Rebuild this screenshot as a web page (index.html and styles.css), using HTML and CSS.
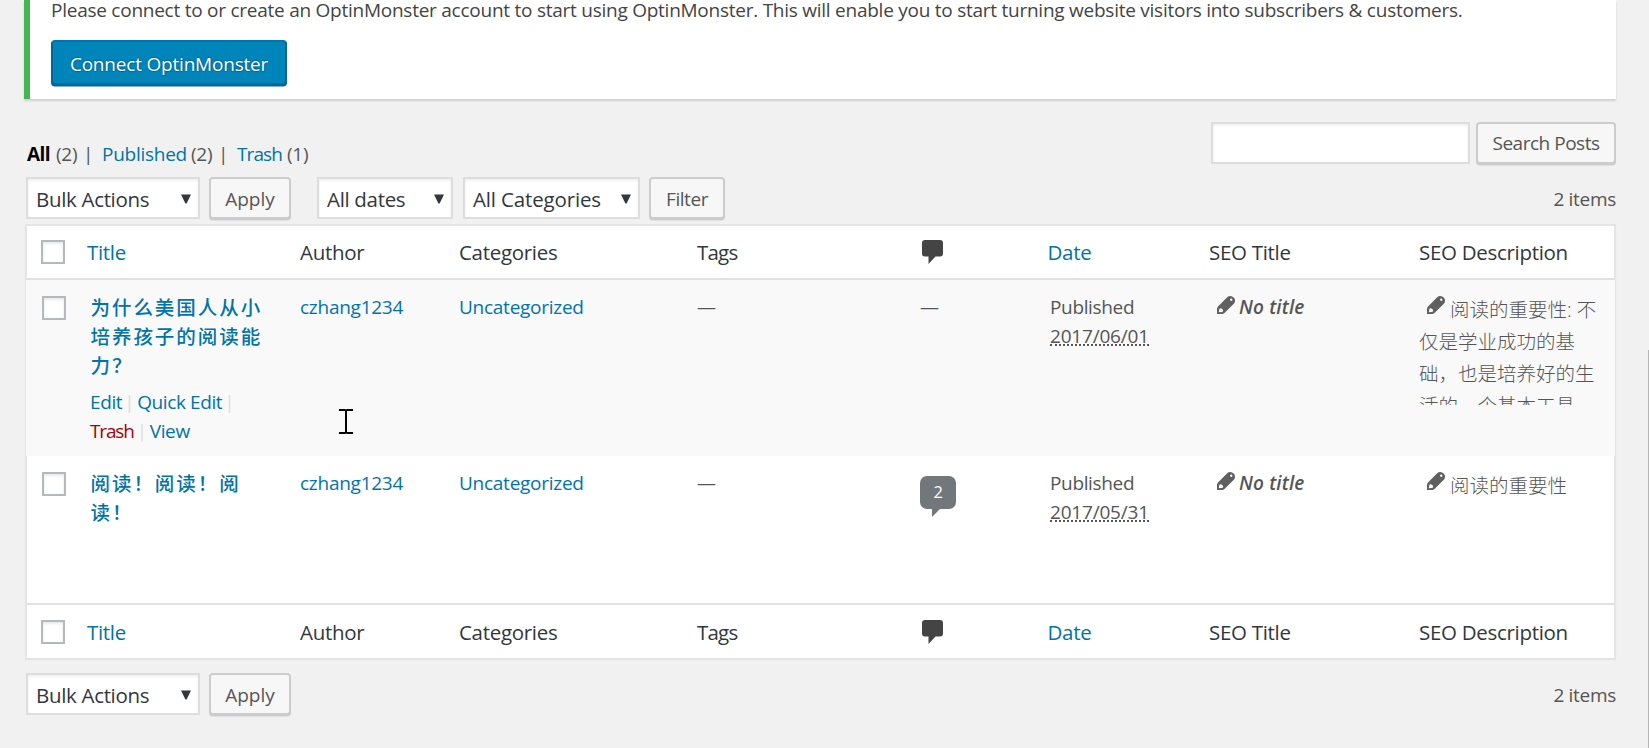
FILE: index.html
```
<!DOCTYPE html>
<html lang="en">
<head>
<meta charset="utf-8">
<title>Posts</title>
<link rel="stylesheet" href="styles.css">
</head>
<body>
<svg class="defs" width="0" height="0">
  <symbol id="arrow" viewBox="0 0 10 10"><path d="M0 .5h10L5.6 9.6H4.4z" fill="#32373c"/></symbol>
  <symbol id="bubble" viewBox="0 0 21 24"><path d="M3 0h15a3 3 0 0 1 3 3v10.500a3 3 0 0 1-3 3h-4.500L6.500 24v-7.500H3a3 3 0 0 1-3-3V3a3 3 0 0 1 3-3z" fill="#444"/></symbol>
  <symbol id="pencil" viewBox="0 0 18 18"><path fill-rule="evenodd" d="M10.200 1.200Q11.500 0 13.200 0q2 0 3.500 1.500T18 5q0 1.500-1.200 2.800L7.500 17Q6.500 18 5 18H0v-5q0-1.500 1-2.500zM13.800 2.600a1.200 1.200 0 1 0 1.600 1.700 1.500 1.500 0 0 0-1.600-1.700zM2.600 12.500l-.8 3.200.8.600 3.200-.6a2 2 0 0 0-.6-2.600 2 2 0 0 0-2.600-.6z" fill="#606060"/></symbol>
</svg>

<div class="wrap">
  <div class="notice">
    <p>Please connect to or create an OptinMonster account to start using OptinMonster. This will enable you to start turning website visitors into subscribers &amp; customers.</p>
    <a class="button-primary">Connect OptinMonster</a>
  </div>

  <div class="toolbar">
    <div class="views"><b>All</b><span class="count">(2)</span><i>|</i><a>Published</a><span class="count">(2)</span><i>|</i><a class="tight">Trash</a><span class="count">(1)</span></div>
    <div class="search"><input type="text" class="search-input"><button class="button search-button">Search Posts</button></div>
  </div>

  <div class="tablenav">
    <div class="select bulk">Bulk Actions<svg><use href="#arrow"/></svg></div>
    <button class="button apply">Apply</button>
    <div class="select dates">All dates<svg><use href="#arrow"/></svg></div>
    <div class="select cats">All Categories<svg><use href="#arrow"/></svg></div>
    <button class="button filter">Filter</button>
    <span class="items">2 items</span>
  </div>

  <div class="table">
    <div class="row head">
      <span class="check"></span><a>Title</a><span>Author</span><span>Categories</span><span class="tags">Tags</span><svg class="bubble"><use href="#bubble"/></svg><a>Date</a><span>SEO Title</span><span>SEO Description</span>
    </div>
    <div class="row post alt">
      <span class="check"></span>
      <div class="title">
        <a class="row-title">为什么美国人从小<br>培养孩子的阅读能<br>力？</a>
        <div class="actions"><a>Edit</a><i>|</i><a>Quick Edit</a><i>|</i><br><a class="delete">Trash</a><i>|</i><a>View</a></div>
      </div>
      <a>czhang1234</a><a>Uncategorized</a><span>—</span><span>—</span>
      <div class="date">Published<br><abbr>2017/06/01</abbr></div>
      <div class="seo"><svg class="pencil"><use href="#pencil"/></svg><em>No title</em></div>
      <div class="desc"><svg class="pencil"><use href="#pencil"/></svg>阅读的重要性: 不<br>仅是学业成功的基<br>础，也是培养好的生<br>活的一个基本工具</div>
    </div>
    <div class="row post">
      <span class="check"></span>
      <div class="title"><a class="row-title">阅读！阅读！阅<br>读！</a></div>
      <a>czhang1234</a><a>Uncategorized</a><span>—</span>
      <div class="replies"><span class="reply-count">2</span></div>
      <div class="date">Published<br><abbr>2017/05/31</abbr></div>
      <div class="seo"><svg class="pencil"><use href="#pencil"/></svg><em>No title</em></div>
      <div class="desc"><svg class="pencil"><use href="#pencil"/></svg>阅读的重要性</div>
    </div>
    <div class="row foot">
      <span class="check"></span><a>Title</a><span>Author</span><span>Categories</span><span class="tags">Tags</span><svg class="bubble"><use href="#bubble"/></svg><a>Date</a><span>SEO Title</span><span>SEO Description</span>
    </div>
  </div>

  <div class="tablenav bottom">
    <div class="select bulk">Bulk Actions<svg><use href="#arrow"/></svg></div>
    <button class="button apply">Apply</button>
    <span class="items">2 items</span>
  </div>
</div>

<svg class="cursor" viewBox="0 0 14 25"><path d="M0 1h5.500q1.500 0 1.500 1 0-1 1.500-1H14M7 1.500v22M0 24h5.500Q7 24 7 23q0 1 1.500 1H14" fill="none" stroke="#000" stroke-width="2"/></svg>
<div class="scroll-edge"></div>
</body>
</html>
```
FILE: styles.css
```
* { box-sizing: border-box; }

body {
  margin: 0;
  height: 748px;
  overflow: hidden;
  position: relative;
  background: #f1f1f1;
  color: #555;
  font: 19px/29px "Open Sans", "Noto Sans CJK SC", sans-serif;
  letter-spacing: -0.26px;
}

a { color: #0073aa; }
i { font-style: normal; }
.defs { position: absolute; }

.wrap { padding: 0 33px 0 24px; }

.notice {
  height: 99px;
  padding-left: 21px;
  background: #fff;
  border-left: 6px solid #46b450;
  box-shadow: 0 1.5px 2px rgba(0, 0, 0, .14);
  color: #444;
}
.notice p {
  margin: 0 0 16px;
  height: 24px;
  line-height: 21px;
  letter-spacing: -0.25px;
  white-space: nowrap;
}

.button-primary {
  display: block;
  width: 236px;
  height: 45px;
  border: 2px solid #006799;
  border-top-color: #0073aa;
  border-radius: 4px;
  box-shadow: 0 1.500px 0 #006799;
  background: #0085ba;
  color: #fff;
  line-height: 45px;
  text-align: center;
  letter-spacing: -0.2px;
  text-shadow: 0 -1px 1px #006799, 1px 0 1px #006799, 0 1px 1px #006799;
}

.toolbar {
  display: flex;
  justify-content: space-between;
  padding-top: 23px;
  height: 78px;
}
.views {
  display: flex;
  padding: 18px 0 0 3px;
  white-space: nowrap;
}
.views b { color: #000; width: 29px; letter-spacing: -0.6px; }
.views i { width: 19px; padding-left: 5px; margin-right: 5px; }
.views .count { width: 22px; }
.views a { width: 89px; }
.views a.tight { width: 50px; letter-spacing: -0.9px; }

.search { display: flex; gap: 6px; }
.search-input {
  width: 259px;
  height: 42px;
  border: 2px solid #ddd;
  box-shadow: inset 0 1.500px 3px rgba(0, 0, 0, .07);
  background: #fff;
}

.button {
  height: 42px;
  padding: 0;
  border: 2px solid #ccc;
  border-radius: 4px;
  box-shadow: 0 1.500px 0 #ccc;
  background: #f7f7f7;
  color: #555;
  font: inherit;
  line-height: 38px;
  letter-spacing: -0.2px;
  text-align: center;
}
.search-button { width: 140px; letter-spacing: -0.48px; }

.tablenav {
  display: flex;
  height: 47px;
  padding-left: 2px;
}
.select {
  display: flex;
  justify-content: space-between;
  height: 42px;
  padding: 0 7px 0 8px;
  border: 2px solid #ddd;
  box-shadow: inset 0 1.500px 3px rgba(0, 0, 0, .07);
  background: #fff;
  color: #32373c;
  font-size: 20.5px;
  line-height: 40px;
  letter-spacing: -0.32px;
}
.select svg { width: 10px; height: 10px; margin-top: 15px; }
.bulk { width: 174px; }
.apply { width: 82px; margin: 0 26px 0 9px; letter-spacing: 0; }
.dates { width: 136px; margin-right: 10px; }
.cats { width: 177px; margin-right: 9px; letter-spacing: -0.15px; }
.filter { width: 76px; letter-spacing: -0.45px; }
.apply, .filter { line-height: 39px; padding-top: 1px; }
.items { margin-left: auto; line-height: 45px; letter-spacing: -0.3px; }

.table {
  margin-left: .5px;
  border: 2px solid #e5e5e5;
  border-bottom: 0;
  box-shadow: 0 2px 1px #e3e3e3;
  background: #fff;
}
.row {
  display: grid;
  grid-template-columns: 60.500px 213px 159px 238px 223px 127.500px 161.500px 210px 1fr;
}
.head, .foot {
  color: #32373c;
  font-size: 20.5px;
  line-height: 52px;
  letter-spacing: -0.3px;
}
.head { height: 54px; border-bottom: 2px solid #e1e1e1; }
.foot { height: 55px; border-top: 2px solid #e1e1e1; line-height: 54px; }
.tags { letter-spacing: -0.8px; }
.check {
  width: 24px;
  height: 24px;
  margin: 14px 0 0 14px;
  border: 2px solid #b4b9be;
  box-shadow: inset 0 1.500px 3px rgba(0, 0, 0, .1);
  background: #fff;
}
.foot .check { margin-top: 15px; }
.bubble { width: 21px; height: 24px; margin: 14px 0 0 2px; }
.foot .bubble { margin-top: 15px; }

.post { height: 147px; padding-top: 13px; }
.alt { height: 176px; background: #f9f9f9; margin: 0 -1px; padding-left: 1px; padding-right: 1px; }
.post .check { margin: 3px 0 0 15px; }
.title { padding-left: 3.500px; }
.row-title {
  display: block;
  font-weight: 500;
  font-size: 19.5px;
  letter-spacing: 1.950px;
  white-space: nowrap;
}
.actions { padding-top: 8px; white-space: nowrap; letter-spacing: -0.4px; }
.actions a:first-child { margin-left: -0.5px; }
.actions i { color: #ddd; margin: 0 3px 0 2px; }
.actions .delete { color: #a00; letter-spacing: -1.150px; margin-left: -0.5px; margin-right: 1px; }
.date { padding-left: 2.500px; letter-spacing: -0.35px; }
abbr {
  display: inline-block;
  height: 24px;
  vertical-align: top;
  border-bottom: 2px dotted #555;
  letter-spacing: -0.2px;
}
.pencil { width: 18px; height: 18px; margin: 3px 4px 0 8px; vertical-align: top; }
.seo { white-space: nowrap; }
em { font-weight: 600; letter-spacing: 0.150px; }
.desc {
  height: 111px;
  margin-top: 1px;
  overflow: hidden;
  font-size: 19.5px;
  font-weight: 300;
  line-height: 32px;
  letter-spacing: 0;
  white-space: nowrap;
}
.desc .pencil { margin-top: 2px; margin-right: 5px; }

.reply-count {
  display: block;
  position: relative;
  width: 36px;
  height: 33px;
  margin-top: 7px;
  border-radius: 7px;
  background: #72777c;
  color: #fff;
  font-size: 16.5px;
  line-height: 32px;
  text-align: center;
}
.reply-count::after {
  content: "";
  position: absolute;
  left: 12px;
  top: 33px;
  border-top: 8px solid #72777c;
  border-right: 8px solid transparent;
}

.bottom { padding-top: 15px; height: 62px; }

.cursor { position: absolute; left: 339px; top: 409px; width: 14px; height: 25px; }
.scroll-edge { position: absolute; right: 0; top: 350px; width: 1px; height: 398px; background: #b5b5b5; }
```
